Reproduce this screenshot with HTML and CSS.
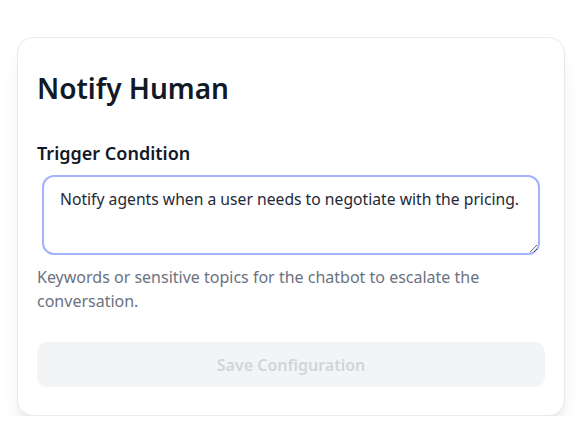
FILE: index.html
```html
<!DOCTYPE html>
<html lang="en">
<head>
<meta charset="utf-8">
<title>Notify Human</title>
<link rel="stylesheet" href="styles.css">
</head>
<body>
<div class="card">
  <h1 class="title">Notify Human</h1>
  <label class="label" for="trigger">Trigger Condition</label>
  <textarea class="field" id="trigger">Notify agents when a user needs to negotiate with the pricing.</textarea>
  <p class="help">Keywords or sensitive topics for the chatbot to escalate the conversation.</p>
  <button class="save" type="button" disabled>Save Configuration</button>
</div>
</body>
</html>
```
FILE: styles.css
```css
html, body {
  margin: 0;
  padding: 0;
  background: #ffffff;
}
body {
  font-family: "Noto Sans", "Open Sans", sans-serif;
  color: #111827;
}
.card {
  box-sizing: border-box;
  width: 548px;
  margin: 37px 0 0 17px;
  padding: 32px 19px 28px 19px;
  background: #ffffff;
  border: 1px solid #e9eaee;
  border-radius: 16px;
  box-shadow: 0 16px 22px -6px rgba(0, 0, 0, 0.10), 0 6px 10px -6px rgba(0, 0, 0, 0.10);
  display: flex;
  flex-direction: column;
}
.title {
  margin: 0;
  font-size: 28px;
  line-height: 36px;
  font-weight: 600;
  color: #111827;
}
.label {
  display: block;
  margin-top: 33px;
  font-size: 18px;
  line-height: 28px;
  font-weight: 600;
  color: #111827;
}
.field {
  box-sizing: border-box;
  display: block;
  margin: 8px 5px 0 5px;
  height: 80px;
  padding: 10px 16px;
  border: 2px solid #a3b2fa;
  border-radius: 12px;
  font-family: inherit;
  font-size: 15.7px;
  line-height: 24px;
  color: #1f2937;
  outline: none;
  resize: vertical;
}
.help {
  margin: 10px 0 0 0;
  font-size: 16px;
  line-height: 24px;
  color: #6b7280;
}
.save {
  margin-top: 29px;
  height: 45px;
  border: none;
  border-radius: 10px;
  background: #f3f4f6;
  color: #d1d5db;
  font-family: inherit;
  font-size: 16px;
  font-weight: 600;
}
```
